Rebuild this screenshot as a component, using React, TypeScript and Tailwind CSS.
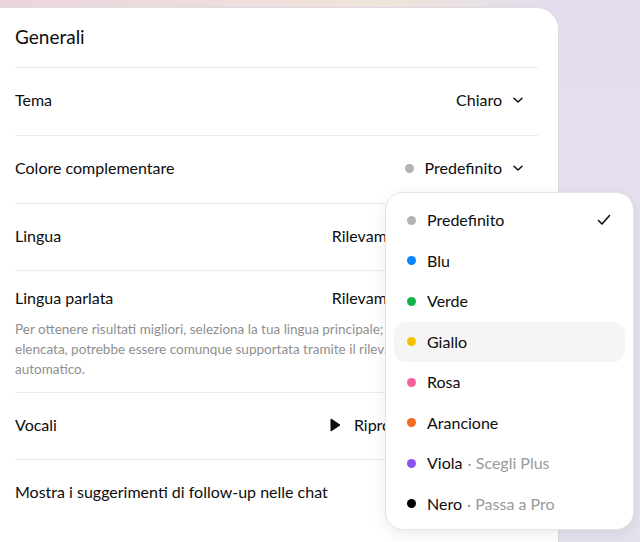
import React from "react";

const font = { fontFamily: "Lato, 'Noto Sans', sans-serif" };

function Chevron() {
  return (
    <svg width="12" height="12" viewBox="0 0 12 12" fill="none" className="ml-[10px]">
      <path d="M2 4.2 L6 8 L10 4.2" stroke="#0d0d0d" strokeWidth="1.5" strokeLinecap="round" strokeLinejoin="round" />
    </svg>
  );
}

const colors = [
  { name: "Predefinito", c: "#b3b3b3", check: true },
  { name: "Blu", c: "#0a84ff" },
  { name: "Verde", c: "#12b14b" },
  { name: "Giallo", c: "#f6c200", hl: true },
  { name: "Rosa", c: "#f7609f" },
  { name: "Arancione", c: "#f46a1f" },
  { name: "Viola", c: "#8c52f0", extra: "Scegli Plus" },
  { name: "Nero", c: "#000000", extra: "Passa a Pro" },
];

export default function App() {
  return (
    <div
      className="relative w-[640px] h-[542px] overflow-hidden text-[#0d0d0d]"
      style={font}
    >
      <div className="absolute inset-0 bg-[linear-gradient(90deg,#ead5dc_0%,#efe0dc_45%,#eee4d8_60%,#e2dcee_88%,#d9ddf2_100%)]" />
      <div className="absolute left-[558px] top-0 w-[82px] h-[542px] bg-[linear-gradient(180deg,#e2dcee_0%,#e6e0ef_40%,#e3e3ee_100%)]" />
      <div className="relative pt-[7px]">
        <div className="w-[559px] h-[560px] bg-white rounded-tr-[22px] border-r border-t border-[#dcdae2] pl-[15px] pr-[20px]">
          <div className="h-[60px] border-b border-[#ececec] flex items-center text-[19px]">
            Generali
          </div>
          <div className="h-[68px] pb-[3px] border-b border-[#ececec] flex items-center justify-between text-[16px]">
            <span>Tema</span>
            <span className="flex items-center pr-[14px]">
              Chiaro
              <Chevron />
            </span>
          </div>
          <div className="h-[68px] pb-[3px] border-b border-[#ececec] flex items-center justify-between text-[16px]">
            <span>Colore complementare</span>
            <span className="flex items-center pr-[14px]">
              <span className="w-[9px] h-[9px] rounded-full bg-[#b3b3b3] mr-[11px]" />
              Predefinito
              <Chevron />
            </span>
          </div>
          <div className="h-[67px] pb-[3px] border-b border-[#ececec] flex items-center justify-between text-[16px]">
            <span>Lingua</span>
            <span className="flex items-center pr-[14px]">
              Rilevamento automatico
              <Chevron />
            </span>
          </div>
          <div className="border-b border-[#ececec] pt-[15px] pb-[13px]">
            <div className="h-[24px] flex items-center justify-between text-[16px]">
              <span>Lingua parlata</span>
              <span className="flex items-center pr-[14px]">
                Rilevamento automatico
                <Chevron />
              </span>
            </div>
            <div className="mt-[9px] text-[13.5px] leading-[20px] text-[#8f8f8f]">
              Per ottenere risultati migliori, seleziona la tua lingua principale; se non è
              <br />
              elencata, potrebbe essere comunque supportata tramite il rilevamento
              <br />
              automatico.
            </div>
          </div>
          <div className="h-[67px] pb-[2px] border-b border-[#ececec] flex items-center justify-between text-[16px]">
            <span>Vocali</span>
            <span className="flex items-center pr-[14px]">
              <svg width="11" height="14" viewBox="0 0 11 14" className="mr-[13px]">
                <path d="M1 1 L10 7 L1 13 Z" fill="#0d0d0d" stroke="#0d0d0d" strokeWidth="1" strokeLinejoin="round" />
              </svg>
              Riproduci
              <span className="ml-[30px]">Juniper</span>
              <Chevron />
            </span>
          </div>
          <div className="h-[67px] pb-[3px] flex items-center justify-between text-[16px]">
            <span>Mostra i suggerimenti di follow-up nelle chat</span>
            <span className="mr-[4px] w-[32px] h-[20px] rounded-full bg-[#0d0d0d] flex items-center justify-end pr-[2px]">
              <span className="w-[16px] h-[16px] rounded-full bg-white" />
            </span>
          </div>
        </div>
      </div>

      <div className="absolute left-[385px] top-[192px] w-[249px] h-[338px] bg-white rounded-[18px] border border-[#e3e3e3] shadow-[0_4px_16px_rgba(0,0,0,0.08)] px-[8px] pt-[7px]">
        {colors.map((it) => (
          <div
            key={it.name}
            className={
              "h-[40.5px] flex items-center pl-[13px] pr-[14px] rounded-[12px] text-[16px] " +
              (it.hl ? "bg-[#f5f5f5]" : "")
            }
          >
            <span className="w-[9px] h-[9px] rounded-full mr-[11px]" style={{ background: it.c }} />
            <span>{it.name}</span>
            {it.extra && <span className="text-[#9a9a9a] ml-[5px]">· {it.extra}</span>}
            {it.check && (
              <svg width="14" height="12" viewBox="0 0 14 12" className="ml-auto">
                <path d="M1.5 6.5 L5 10 L12.5 1.5" fill="none" stroke="#0d0d0d" strokeWidth="1.6" strokeLinecap="round" strokeLinejoin="round" />
              </svg>
            )}
          </div>
        ))}
      </div>
    </div>
  );
}
